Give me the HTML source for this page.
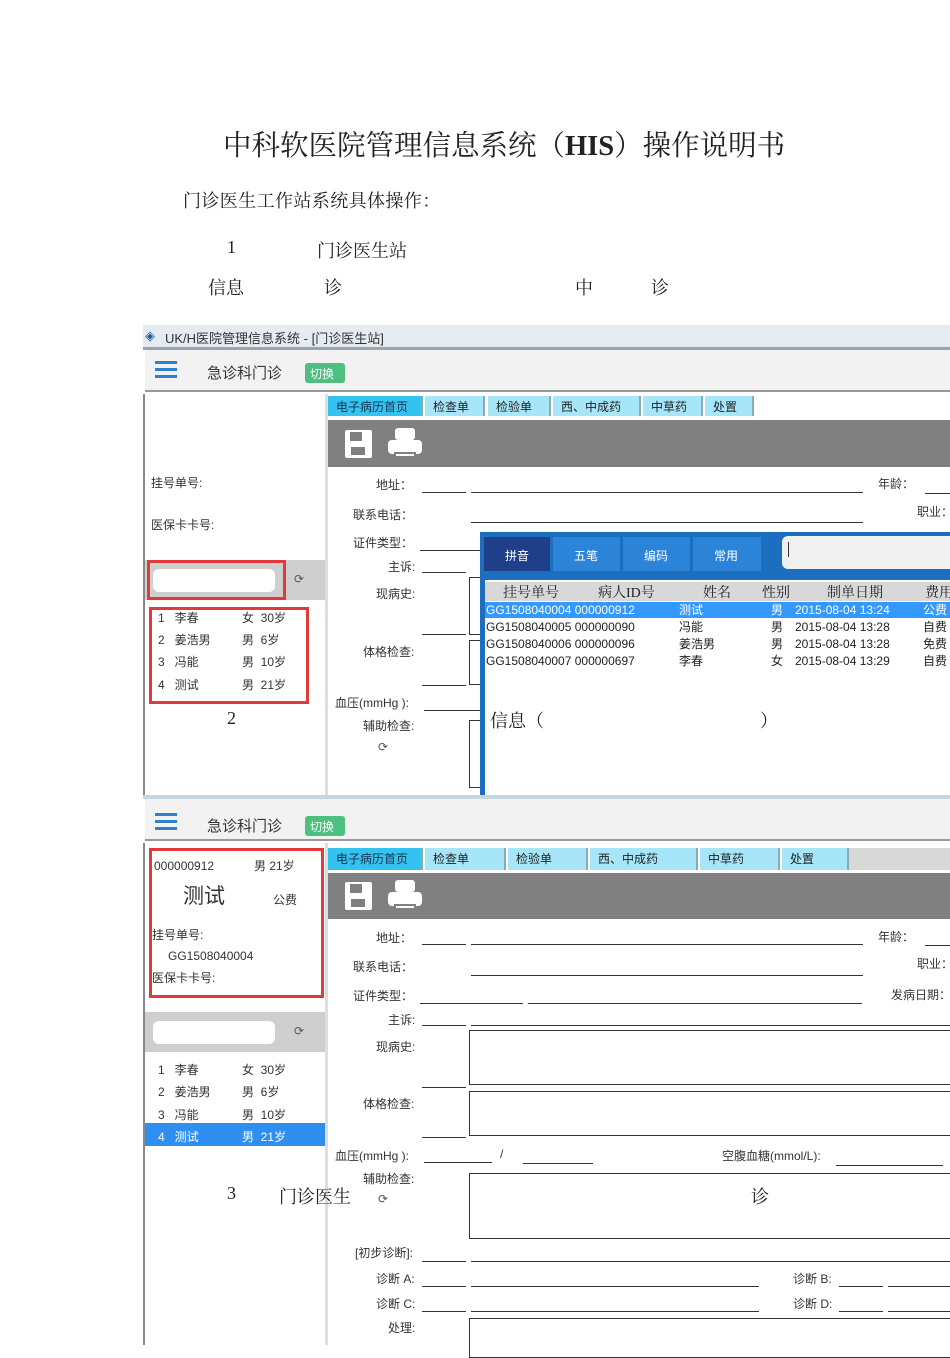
<!DOCTYPE html>
<html><head><meta charset="utf-8"><style>
*{margin:0;padding:0;box-sizing:border-box}
body{width:950px;height:1345px;background:#fff;position:relative;overflow:hidden;font-family:"Liberation Sans","Noto Sans CJK SC",sans-serif;color:#222}
.a{position:absolute;white-space:nowrap}
.s{font-family:"Liberation Serif","Noto Serif CJK SC",serif;color:#222}
.t{position:absolute;white-space:nowrap;font-size:12px;color:#333}
.ln{position:absolute;height:1px;background:#333}
.bx{position:absolute;border:1px solid #333}
.tab{position:absolute;height:20px;background:#a6e6f8;font-size:12px;padding:2px 0 0 8px;border-right:2px solid #8ab;color:#222}
.tab.on{background:#33c3ee;color:#1a2f50}
.sel{background:#3399ff;color:#fff}
</style></head><body>
<div class="a s" style="left:223px;top:123px;font-size:28.5px;">中科软医院管理信息系统（<b>HIS</b>）操作说明书</div>
<div class="a s" style="left:183px;top:187px;font-size:18px;letter-spacing:0.4px">门诊医生工作站系统具体操作：</div>
<div class="a s" style="left:227px;top:237px;font-size:18px;">1</div>
<div class="a s" style="left:317px;top:237px;font-size:18px;">门诊医生站</div>
<div class="a s" style="left:208px;top:274px;font-size:18px;">信息</div>
<div class="a s" style="left:324px;top:274px;font-size:18px;">诊</div>
<div class="a s" style="left:575px;top:274px;font-size:18px;">中</div>
<div class="a s" style="left:651px;top:274px;font-size:18px;">诊</div>

<!-- screenshot 1 -->
<div class="a" style="left:143px;top:325px;width:807px;height:22px;background:#e6ebf1;"></div>
<div class="a" style="left:145px;top:328px;font-size:13px;color:#1f5fa0">◈</div>
<div class="t" style="left:165px;top:328px;font-size:13px;">UK/H医院管理信息系统 - [门诊医生站]</div>
<div class="a" style="left:143px;top:347px;width:807px;height:3px;background:#9aa4b0;"></div>
<div class="a" style="left:145px;top:350px;width:805px;height:42px;background:#f2f2f2;border-bottom:2px solid #999"></div>
<div class="a" style="left:155px;top:361px;width:22px;height:3px;background:#2d7fd0;box-shadow:0 7px 0 #2d7fd0,0 14px 0 #2d7fd0"></div>
<div class="t" style="left:207px;top:362px;font-size:15px;">急诊科门诊</div>
<div class="a" style="left:305px;top:363px;width:40px;height:20px;background:#4dbf7f;color:#fff;font-size:12px;padding:2px 5px;border-radius:3px">切换</div>
<div class="a" style="left:143px;top:394px;width:2px;height:401px;background:#888"></div>
<div class="a" style="left:325px;top:394px;width:3px;height:401px;background:#ddd"></div>
<div class="tab on" style="left:328px;top:396px;width:95px;">电子病历首页</div>
<div class="tab" style="left:425px;top:396px;width:60px;">检查单</div>
<div class="tab" style="left:488px;top:396px;width:63px;">检验单</div>
<div class="tab" style="left:553px;top:396px;width:88px;">西、中成药</div>
<div class="tab" style="left:643px;top:396px;width:60px;">中草药</div>
<div class="tab" style="left:705px;top:396px;width:49px;">处置</div>
<div class="a" style="left:328px;top:420px;width:622px;height:47px;background:#808080"></div>
<div class="a" style="left:345px;top:430px;width:27px;height:28px;background:#fff;border-radius:2px"><div style="position:absolute;left:5px;top:2px;width:12px;height:9px;background:#808080"></div><div style="position:absolute;left:6px;top:17px;width:14px;height:8px;background:#808080"></div></div>
<div class="a" style="left:388px;top:428px;width:34px;height:32px;"><div style="position:absolute;left:7px;top:0;width:20px;height:12px;background:#fff;border-radius:3px"></div><div style="position:absolute;left:0;top:12px;width:34px;height:14px;background:#fff;border-radius:4px"></div><div style="position:absolute;left:6px;top:24px;width:22px;height:6px;background:#fff;border:2px solid #808080"></div></div>

<div class="t" style="left:151px;top:474px;">挂号单号:</div>
<div class="t" style="left:151px;top:516px;">医保卡卡号:</div>
<div class="a" style="left:145px;top:560px;width:180px;height:40px;background:#cfcfcf"></div>
<div class="a" style="left:153px;top:569px;width:122px;height:23px;background:#fff;border-radius:6px"></div>
<div class="a" style="left:147px;top:560px;width:139px;height:40px;border:3px solid #e03a3a"></div>
<div class="t" style="left:294px;top:572px;color:#555">⟳</div>
<div class="a" style="left:149px;top:607px;width:160px;height:97px;border:3px solid #e03a3a"></div>
<div class="t" style="left:158px;top:609px;">1&nbsp;&nbsp;&nbsp;李春</div><div class="t" style="left:242px;top:609px;">女&nbsp;&nbsp;30岁</div>
<div class="t" style="left:158px;top:631px;">2&nbsp;&nbsp;&nbsp;姜浩男</div><div class="t" style="left:242px;top:631px;">男&nbsp;&nbsp;6岁</div>
<div class="t" style="left:158px;top:653px;">3&nbsp;&nbsp;&nbsp;冯能</div><div class="t" style="left:242px;top:653px;">男&nbsp;&nbsp;10岁</div>
<div class="t" style="left:158px;top:676px;">4&nbsp;&nbsp;&nbsp;测试</div><div class="t" style="left:242px;top:676px;">男&nbsp;&nbsp;21岁</div>
<div class="a s" style="left:227px;top:708px;font-size:18px;">2</div>

<div class="t" style="left:376px;top:476px;">地址：</div>
<div class="ln" style="left:422px;top:492px;width:44px"></div><div class="ln" style="left:471px;top:492px;width:392px"></div>
<div class="t" style="left:878px;top:475px;">年龄：</div><div class="ln" style="left:925px;top:493px;width:25px"></div>
<div class="t" style="left:353px;top:506px;">联系电话：</div><div class="ln" style="left:471px;top:522px;width:392px"></div>
<div class="t" style="left:917px;top:503px;">职业：</div>
<div class="t" style="left:353px;top:534px;">证件类型：</div><div class="ln" style="left:420px;top:550px;width:62px"></div>
<div class="t" style="left:388px;top:558px;">主诉:</div><div class="ln" style="left:422px;top:572px;width:44px"></div>
<div class="t" style="left:376px;top:585px;">现病史:</div>
<div class="bx" style="left:469px;top:577px;width:20px;height:58px;border-right:none"></div>
<div class="ln" style="left:422px;top:634px;width:44px"></div>
<div class="t" style="left:363px;top:643px;">体格检查:</div>
<div class="bx" style="left:469px;top:640px;width:20px;height:45px;border-right:none"></div>
<div class="ln" style="left:422px;top:685px;width:44px"></div>
<div class="t" style="left:335px;top:694px;">血压(mmHg ):</div><div class="ln" style="left:424px;top:710px;width:60px"></div>
<div class="t" style="left:363px;top:717px;">辅助检查:</div>
<div class="bx" style="left:469px;top:720px;width:20px;height:68px;border-right:none"></div>
<div class="t" style="left:378px;top:740px;color:#555">⟳</div>

<!-- popup -->
<div class="a" style="left:480px;top:532px;width:470px;height:263px;background:#1c6fbf"></div>
<div class="a" style="left:485px;top:580px;width:465px;height:215px;background:#fff"></div>
<div class="a" style="left:484px;top:537px;width:66px;height:34px;background:#1f3f8a;color:#fff;font-size:12px;padding:10px 0 0 21px">拼音</div>
<div class="a" style="left:553px;top:537px;width:67px;height:34px;background:#2b84d8;color:#fff;font-size:12px;padding:10px 0 0 21px">五笔</div>
<div class="a" style="left:623px;top:537px;width:67px;height:34px;background:#2b84d8;color:#fff;font-size:12px;padding:10px 0 0 21px">编码</div>
<div class="a" style="left:693px;top:537px;width:68px;height:34px;background:#2b84d8;color:#fff;font-size:12px;padding:10px 0 0 21px">常用</div>
<div class="a" style="left:782px;top:536px;width:168px;height:33px;background:#f0f0f0;border-radius:6px 0 0 6px"><div style="position:absolute;left:6px;top:6px;width:1px;height:15px;background:#333"></div></div>
<div class="a" style="left:485px;top:582px;width:465px;height:19px;background:#d8d8d8"></div>
<div class="a" style="left:485px;top:582px;font-size:14px;color:#222;font-family:'Liberation Serif','Noto Serif CJK SC',serif">
<span class="a" style="left:18px">挂号单号</span><span class="a" style="left:113px">病人ID号</span><span class="a" style="left:218px">姓名</span><span class="a" style="left:277px">性别</span><span class="a" style="left:342px">制单日期</span><span class="a" style="left:440px">费用</span></div>
<div class="a sel" style="left:485px;top:602px;width:465px;height:16px"></div>
<div class="a" style="left:486px;top:602px;font-size:12px;line-height:17px;color:#222">
<div style="color:#fff">GG1508040004 000000912<span class="a" style="left:193px">测试</span><span class="a" style="left:285px">男</span><span class="a" style="left:309px">2015-08-04 13:24</span><span class="a" style="left:437px">公费</span></div>
<div style="position:relative">GG1508040005 000000090<span class="a" style="left:193px">冯能</span><span class="a" style="left:285px">男</span><span class="a" style="left:309px">2015-08-04 13:28</span><span class="a" style="left:437px">自费</span></div>
<div style="position:relative">GG1508040006 000000096<span class="a" style="left:193px">姜浩男</span><span class="a" style="left:285px">男</span><span class="a" style="left:309px">2015-08-04 13:28</span><span class="a" style="left:437px">免费</span></div>
<div style="position:relative">GG1508040007 000000697<span class="a" style="left:193px">李春</span><span class="a" style="left:285px">女</span><span class="a" style="left:309px">2015-08-04 13:29</span><span class="a" style="left:437px">自费</span></div>
</div>
<div class="a s" style="left:490px;top:707px;font-size:18px;">信息（</div>
<div class="a s" style="left:760px;top:707px;font-size:18px;">）</div>
<div class="a" style="left:143px;top:795px;width:807px;height:4px;background:#c8d4e0"></div>

<!-- screenshot 2 -->
<div class="a" style="left:145px;top:799px;width:805px;height:42px;background:#f2f2f2;border-bottom:2px solid #999"></div>
<div class="a" style="left:155px;top:813px;width:22px;height:3px;background:#2d7fd0;box-shadow:0 7px 0 #2d7fd0,0 14px 0 #2d7fd0"></div>
<div class="t" style="left:207px;top:815px;font-size:15px;">急诊科门诊</div>
<div class="a" style="left:305px;top:816px;width:40px;height:20px;background:#4dbf7f;color:#fff;font-size:12px;padding:2px 5px;border-radius:3px">切换</div>
<div class="a" style="left:143px;top:843px;width:2px;height:502px;background:#888"></div>
<div class="a" style="left:325px;top:843px;width:3px;height:502px;background:#ddd"></div>
<div class="tab on" style="left:328px;top:848px;width:95px;height:22px">电子病历首页</div>
<div class="tab" style="left:425px;top:848px;width:81px;height:22px">检查单</div>
<div class="tab" style="left:508px;top:848px;width:80px;height:22px">检验单</div>
<div class="tab" style="left:590px;top:848px;width:108px;height:22px">西、中成药</div>
<div class="tab" style="left:700px;top:848px;width:80px;height:22px">中草药</div>
<div class="tab" style="left:782px;top:848px;width:67px;height:22px">处置</div>
<div class="a" style="left:849px;top:848px;width:101px;height:22px;background:#d8d8d8"></div>
<div class="a" style="left:328px;top:873px;width:622px;height:46px;background:#808080"></div>
<div class="a" style="left:345px;top:882px;width:27px;height:28px;background:#fff;border-radius:2px"><div style="position:absolute;left:5px;top:2px;width:12px;height:9px;background:#808080"></div><div style="position:absolute;left:6px;top:17px;width:14px;height:8px;background:#808080"></div></div>
<div class="a" style="left:388px;top:880px;width:34px;height:32px;"><div style="position:absolute;left:7px;top:0;width:20px;height:12px;background:#fff;border-radius:3px"></div><div style="position:absolute;left:0;top:12px;width:34px;height:14px;background:#fff;border-radius:4px"></div><div style="position:absolute;left:6px;top:24px;width:22px;height:6px;background:#fff;border:2px solid #808080"></div></div>

<div class="a" style="left:149px;top:848px;width:175px;height:150px;border:3px solid #e03a3a"></div>
<div class="t" style="left:154px;top:859px;">000000912</div><div class="t" style="left:254px;top:857px;">男 21岁</div>
<div class="t" style="left:183px;top:880px;font-size:21px;">测试</div><div class="t" style="left:273px;top:891px;">公费</div>
<div class="t" style="left:152px;top:926px;">挂号单号:</div>
<div class="t" style="left:168px;top:949px;">GG1508040004</div>
<div class="t" style="left:152px;top:969px;">医保卡卡号:</div>
<div class="a" style="left:145px;top:1012px;width:180px;height:40px;background:#cfcfcf"></div>
<div class="a" style="left:153px;top:1021px;width:122px;height:23px;background:#fff;border-radius:6px"></div>
<div class="t" style="left:294px;top:1024px;color:#555">⟳</div>
<div class="t" style="left:158px;top:1061px;">1&nbsp;&nbsp;&nbsp;李春</div><div class="t" style="left:242px;top:1061px;">女&nbsp;&nbsp;30岁</div>
<div class="t" style="left:158px;top:1083px;">2&nbsp;&nbsp;&nbsp;姜浩男</div><div class="t" style="left:242px;top:1083px;">男&nbsp;&nbsp;6岁</div>
<div class="t" style="left:158px;top:1106px;">3&nbsp;&nbsp;&nbsp;冯能</div><div class="t" style="left:242px;top:1106px;">男&nbsp;&nbsp;10岁</div>
<div class="a" style="left:145px;top:1123px;width:180px;height:23px;background:#2f8ff0"></div>
<div class="t" style="left:158px;top:1128px;color:#fff">4&nbsp;&nbsp;&nbsp;测试</div><div class="t" style="left:242px;top:1128px;color:#fff">男&nbsp;&nbsp;21岁</div>

<div class="t" style="left:376px;top:929px;">地址：</div>
<div class="ln" style="left:422px;top:944px;width:44px"></div><div class="ln" style="left:471px;top:944px;width:392px"></div>
<div class="t" style="left:878px;top:928px;">年龄：</div><div class="ln" style="left:925px;top:945px;width:25px"></div>
<div class="t" style="left:353px;top:958px;">联系电话：</div><div class="ln" style="left:471px;top:975px;width:392px"></div>
<div class="t" style="left:917px;top:955px;">职业：</div>
<div class="t" style="left:353px;top:987px;">证件类型：</div>
<div class="ln" style="left:420px;top:1003px;width:103px"></div><div class="ln" style="left:528px;top:1003px;width:334px"></div>
<div class="t" style="left:891px;top:986px;">发病日期：</div>
<div class="t" style="left:388px;top:1011px;">主诉:</div>
<div class="ln" style="left:422px;top:1025px;width:44px"></div><div class="ln" style="left:471px;top:1025px;width:479px"></div>
<div class="t" style="left:376px;top:1038px;">现病史:</div>
<div class="bx" style="left:469px;top:1030px;width:490px;height:55px"></div>
<div class="ln" style="left:422px;top:1087px;width:44px"></div>
<div class="t" style="left:363px;top:1095px;">体格检查:</div>
<div class="bx" style="left:469px;top:1091px;width:490px;height:45px"></div>
<div class="ln" style="left:422px;top:1137px;width:44px"></div>
<div class="t" style="left:335px;top:1147px;">血压(mmHg ):</div>
<div class="ln" style="left:424px;top:1162px;width:68px"></div>
<div class="t" style="left:500px;top:1147px;">/</div>
<div class="ln" style="left:523px;top:1163px;width:70px"></div>
<div class="t" style="left:722px;top:1147px;">空腹血糖(mmol/L):</div>
<div class="ln" style="left:836px;top:1165px;width:107px"></div>
<div class="t" style="left:363px;top:1170px;">辅助检查:</div>
<div class="bx" style="left:469px;top:1173px;width:490px;height:66px"></div>
<div class="t" style="left:378px;top:1192px;color:#555">⟳</div>
<div class="a s" style="left:227px;top:1183px;font-size:18px;">3</div>
<div class="a s" style="left:279px;top:1183px;font-size:18px;">门诊医生</div>
<div class="a s" style="left:751px;top:1183px;font-size:18px;">诊</div>
<div class="t" style="left:355px;top:1244px;">[初步诊断]:</div>
<div class="ln" style="left:422px;top:1261px;width:44px"></div><div class="ln" style="left:471px;top:1261px;width:479px"></div>
<div class="t" style="left:376px;top:1270px;">诊断 A:</div>
<div class="ln" style="left:422px;top:1286px;width:44px"></div><div class="ln" style="left:471px;top:1286px;width:288px"></div>
<div class="t" style="left:793px;top:1270px;">诊断 B:</div>
<div class="ln" style="left:839px;top:1286px;width:44px"></div><div class="ln" style="left:888px;top:1286px;width:62px"></div>
<div class="t" style="left:376px;top:1295px;">诊断 C:</div>
<div class="ln" style="left:422px;top:1311px;width:44px"></div><div class="ln" style="left:471px;top:1311px;width:288px"></div>
<div class="t" style="left:793px;top:1295px;">诊断 D:</div>
<div class="ln" style="left:839px;top:1311px;width:44px"></div><div class="ln" style="left:888px;top:1311px;width:62px"></div>
<div class="t" style="left:388px;top:1319px;">处理:</div>
<div class="bx" style="left:469px;top:1318px;width:490px;height:40px"></div>
</body></html>
